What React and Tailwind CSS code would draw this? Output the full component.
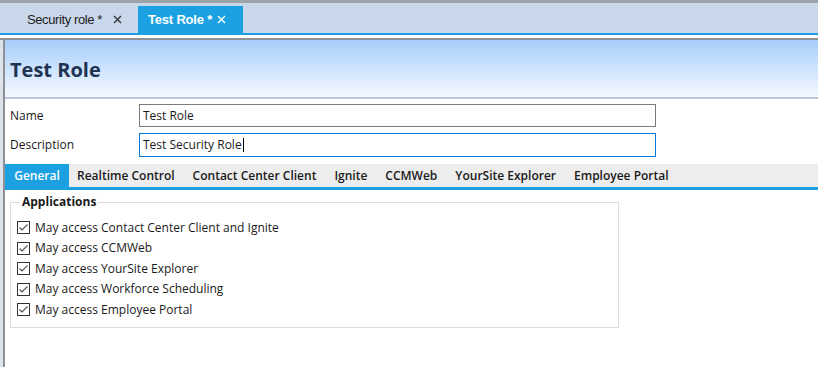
import React from 'react'

const apps = [
  'May access Contact Center Client and Ignite',
  'May access CCMWeb',
  'May access YourSite Explorer',
  'May access Workforce Scheduling',
  'May access Employee Portal',
]

const subTabs = ['Realtime Control', 'Contact Center Client', 'Ignite', 'CCMWeb', 'YourSite Explorer', 'Employee Portal']

function Check() {
  return (
    <svg width="13" height="13" viewBox="0 0 13 13" className="shrink-0">
      <rect x="0.5" y="0.5" width="12" height="12" fill="#fff" stroke="#333" />
      <path d="M2.5 6.5 L5 9 L10.5 3.5" fill="none" stroke="#555" strokeWidth="1.2" />
    </svg>
  )
}

function Close({ color }) {
  return (
    <svg width="9" height="9" viewBox="0 0 9 9" className="shrink-0">
      <path d="M1 1 L8 8 M8 1 L1 8" stroke={color} strokeWidth="1.4" />
    </svg>
  )
}

export default function App() {
  return (
    <div className="w-[818px] h-[367px] overflow-hidden bg-white flex flex-col font-['Open_Sans',sans-serif] text-[12px] text-[#1a1a1a]">
      {/* document tabs */}
      <div className="h-[33px] shrink-0 border-t-[3px] border-[#9ea3aa] bg-[#c8d7ea] flex items-end pl-[20px] font-['Liberation_Sans',sans-serif]">
        <div className="h-[27px] w-[110px] flex items-center pl-[7px] gap-[11px] text-[#222]">
          <span className="text-[13px] tracking-[-0.4px]">Security role *</span>
          <Close color="#333" />
        </div>
        <div className="ml-[8px] h-[27px] w-[105px] bg-[#1ba1e2] flex items-center pl-[10px] gap-[5px] text-white">
          <span className="font-bold tracking-[-0.2px] text-[13px]">Test Role *</span>
          <Close color="#fff" />
        </div>
      </div>
      <div className="h-[2px] shrink-0 bg-[#1ba1e2]" />
      <div className="h-[3px] shrink-0 bg-white" />
      <div className="h-[2px] shrink-0 bg-[#8e9297]" />

      <div className="flex-1 flex">
        <div className="w-[3px] bg-[#dde3ea]" />
        <div className="w-[2px] bg-[#8e9297]" />
        <div className="flex-1 flex flex-col">
          {/* header */}
          <div className="h-[59px] shrink-0 bg-gradient-to-b from-[#a6cdfb] to-[#f5f9ff] border-b-2 border-[#b9c6d8] flex items-center pl-[5px] pt-[2px]">
            <span className="text-[20px] font-bold text-[#1f3352]">Test Role</span>
          </div>

          {/* form */}
          <div className="flex flex-col gap-[6px] pt-[5px] pl-[5px]">
            <div className="flex items-center h-[23px]">
              <span className="w-[129px]">Name</span>
              <div className="w-[517px] h-[23px] border border-[#7a7a7a] flex items-center pl-[3px]">Test Role</div>
            </div>
            <div className="flex items-center h-[24px]">
              <span className="w-[129px]">Description</span>
              <div className="w-[517px] h-[24px] border border-[#0078d7] flex items-center pl-[3px]">
                Test Security Role<span className="w-px h-[14px] bg-black ml-px" />
              </div>
            </div>
          </div>

          {/* sub tabs */}
          <div className="mt-[7px] h-[23px] shrink-0 bg-[#ededed] flex items-stretch font-semibold">
            <div className="w-[64px] bg-[#1ba1e2] text-white flex items-center justify-center">General</div>
            <div className="flex items-center gap-[18px] pl-[8px]">
              {subTabs.map((t) => (
                <span key={t}>{t}</span>
              ))}
            </div>
          </div>
          <div className="h-[3px] shrink-0 bg-[#1ba1e2]" />

          {/* group */}
          <fieldset className="ml-[5px] mt-[3px] w-[609px] border border-[#dcdcdc] pl-[6px] pb-[9px]">
            <legend className="ml-[3px] px-[2px] font-bold">Applications</legend>
            <div className="flex flex-col gap-[3.5px] mt-[8px]">
              {apps.map((a) => (
                <div key={a} className="flex items-center gap-[5px] h-[17px]">
                  <Check />
                  <span>{a}</span>
                </div>
              ))}
            </div>
          </fieldset>
        </div>
      </div>
    </div>
  )
}
